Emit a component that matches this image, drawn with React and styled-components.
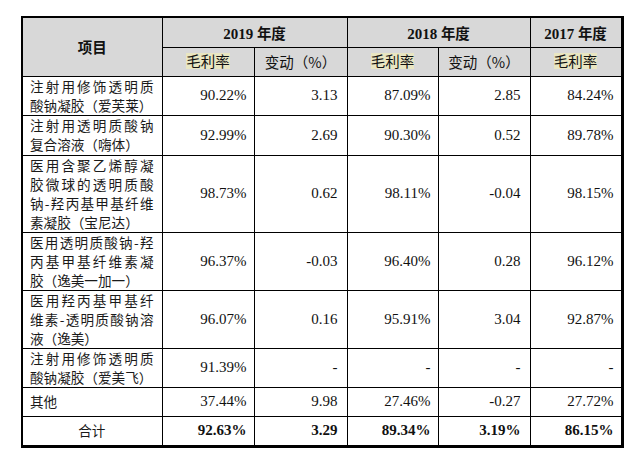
import React from "react";
import styled, { createGlobalStyle } from "styled-components";

const Global = createGlobalStyle`
  html, body { margin: 0; padding: 0; background: #fff; }
  body {
    font-family: "Liberation Serif", "Noto Sans CJK SC", serif;
    color: #111;
    text-spacing-trim: space-all;
    font-feature-settings: "fwid" 0;
  }
`;

const Page = styled.div`
  padding: 16px 0 0 21px;
`;

const Table = styled.table`
  border-collapse: collapse;
  table-layout: fixed;
  width: 600px;
  border-left: 2px solid #000;
  border-top: 2px solid #000;
  border-right: 3px solid #000;
  border-bottom: 3px solid #000;
`;

const Row = styled.tr`
  height: ${(p) => p.$h}px;
`;

const HeadCell = styled.th`
  background: #d8d8d8;
  border: 1px solid #000;
  padding: 0;
  text-align: center;
  vertical-align: middle;
  font-family: "Liberation Serif", "Noto Sans CJK SC", serif;
  font-size: 15px;
  font-weight: ${(p) => (p.$bold ? 700 : 400)};
  color: #111;
`;

const CjkHead = styled.span`
  font-family: "Noto Sans CJK SC", sans-serif;
  font-size: 14.5px;
  font-weight: inherit;
  text-spacing-trim: space-all;
`;

const Mark = styled.span`
  display: inline-block;
  background: #e9e6c2;
  line-height: 16px;
  font-family: "Noto Sans CJK SC", sans-serif;
  font-size: 14.5px;
  font-weight: 400;
`;

const NameCell = styled.td`
  border: 1px solid #000;
  padding: 0 8px 0 7px;
  vertical-align: middle;
  font-family: "Noto Sans CJK SC", sans-serif;
  font-size: 13.6px;
  line-height: 19px;
  color: #1a1a1a;
  text-spacing-trim: space-all;
  text-align: ${(p) => (p.$center ? "center" : "left")};
`;

const Line = styled.span`
  display: block;
  white-space: nowrap;
  text-align: ${(p) => (p.$justify ? "justify" : "inherit")};
  text-align-last: ${(p) => (p.$justify ? "justify" : "auto")};
`;

const NumCell = styled.td`
  border: 1px solid #000;
  padding: 0 ${(p) => (p.$change ? 9 : 7)}px 0 0;
  vertical-align: middle;
  text-align: right;
  font-family: "Liberation Serif", serif;
  font-size: 15px;
  font-weight: ${(p) => (p.$bold ? 700 : 400)};
  color: #111;
`;

const rows = [
  {
    name: ["注射用修饰透明质", "酸钠凝胶（爱芙莱）"],
    v: ["90.22%", "3.13", "87.09%", "2.85", "84.24%"],
    h: 37,
  },
  {
    name: ["注射用透明质酸钠", "复合溶液（嗨体）"],
    v: ["92.99%", "2.69", "90.30%", "0.52", "89.78%"],
    h: 40,
  },
  {
    name: ["医用含聚乙烯醇凝", "胶微球的透明质酸", "钠-羟丙基甲基纤维", "素凝胶（宝尼达）"],
    v: ["98.73%", "0.62", "98.11%", "-0.04", "98.15%"],
    h: 77,
  },
  {
    name: ["医用透明质酸钠-羟", "丙基甲基纤维素凝", "胶（逸美一加一）"],
    v: ["96.37%", "-0.03", "96.40%", "0.28", "96.12%"],
    h: 58,
  },
  {
    name: ["医用羟丙基甲基纤", "维素-透明质酸钠溶", "液（逸美）"],
    v: ["96.07%", "0.16", "95.91%", "3.04", "92.87%"],
    h: 58,
  },
  {
    name: ["注射用修饰透明质", "酸钠凝胶（爱美飞）"],
    v: ["91.39%", "-", "-", "-", "-"],
    h: 38,
  },
  {
    name: ["其他"],
    v: ["37.44%", "9.98", "27.46%", "-0.27", "27.72%"],
    h: 29,
  },
];

const total = ["92.63%", "3.29", "89.34%", "3.19%", "86.15%"];

const widths = [140, 92, 93, 91, 92, 92];

export default function App() {
  return (
    <>
      <Global />
      <Page>
        <Table>
          <colgroup>
            {widths.map((w, i) => (
              <col key={i} style={{ width: w }} />
            ))}
          </colgroup>
          <thead>
            <Row $h={30}>
              <HeadCell rowSpan={2} $bold>
                <CjkHead>项目</CjkHead>
              </HeadCell>
              <HeadCell colSpan={2} $bold>
                2019 <CjkHead>年度</CjkHead>
              </HeadCell>
              <HeadCell colSpan={2} $bold>
                2018 <CjkHead>年度</CjkHead>
              </HeadCell>
              <HeadCell $bold>
                2017 <CjkHead>年度</CjkHead>
              </HeadCell>
            </Row>
            <Row $h={29}>
              <HeadCell>
                <Mark>毛利率</Mark>
              </HeadCell>
              <HeadCell>
                <CjkHead>变动（%）</CjkHead>
              </HeadCell>
              <HeadCell>
                <Mark>毛利率</Mark>
              </HeadCell>
              <HeadCell>
                <CjkHead>变动（%）</CjkHead>
              </HeadCell>
              <HeadCell>
                <Mark>毛利率</Mark>
              </HeadCell>
            </Row>
          </thead>
          <tbody>
            {rows.map((r, i) => (
              <Row key={i} $h={r.h}>
                <NameCell>
                  {r.name.map((l, j) => (
                    <Line key={j} $justify={j < r.name.length - 1}>
                      {l}
                    </Line>
                  ))}
                </NameCell>
                {r.v.map((v, j) => (
                  <NumCell key={j} $change={j % 2 === 1}>
                    {v}
                  </NumCell>
                ))}
              </Row>
            ))}
            <Row $h={30}>
              <NameCell $center>合计</NameCell>
              {total.map((v, j) => (
                <NumCell key={j} $bold $change={j % 2 === 1}>
                  {v}
                </NumCell>
              ))}
            </Row>
          </tbody>
        </Table>
      </Page>
    </>
  );
}
